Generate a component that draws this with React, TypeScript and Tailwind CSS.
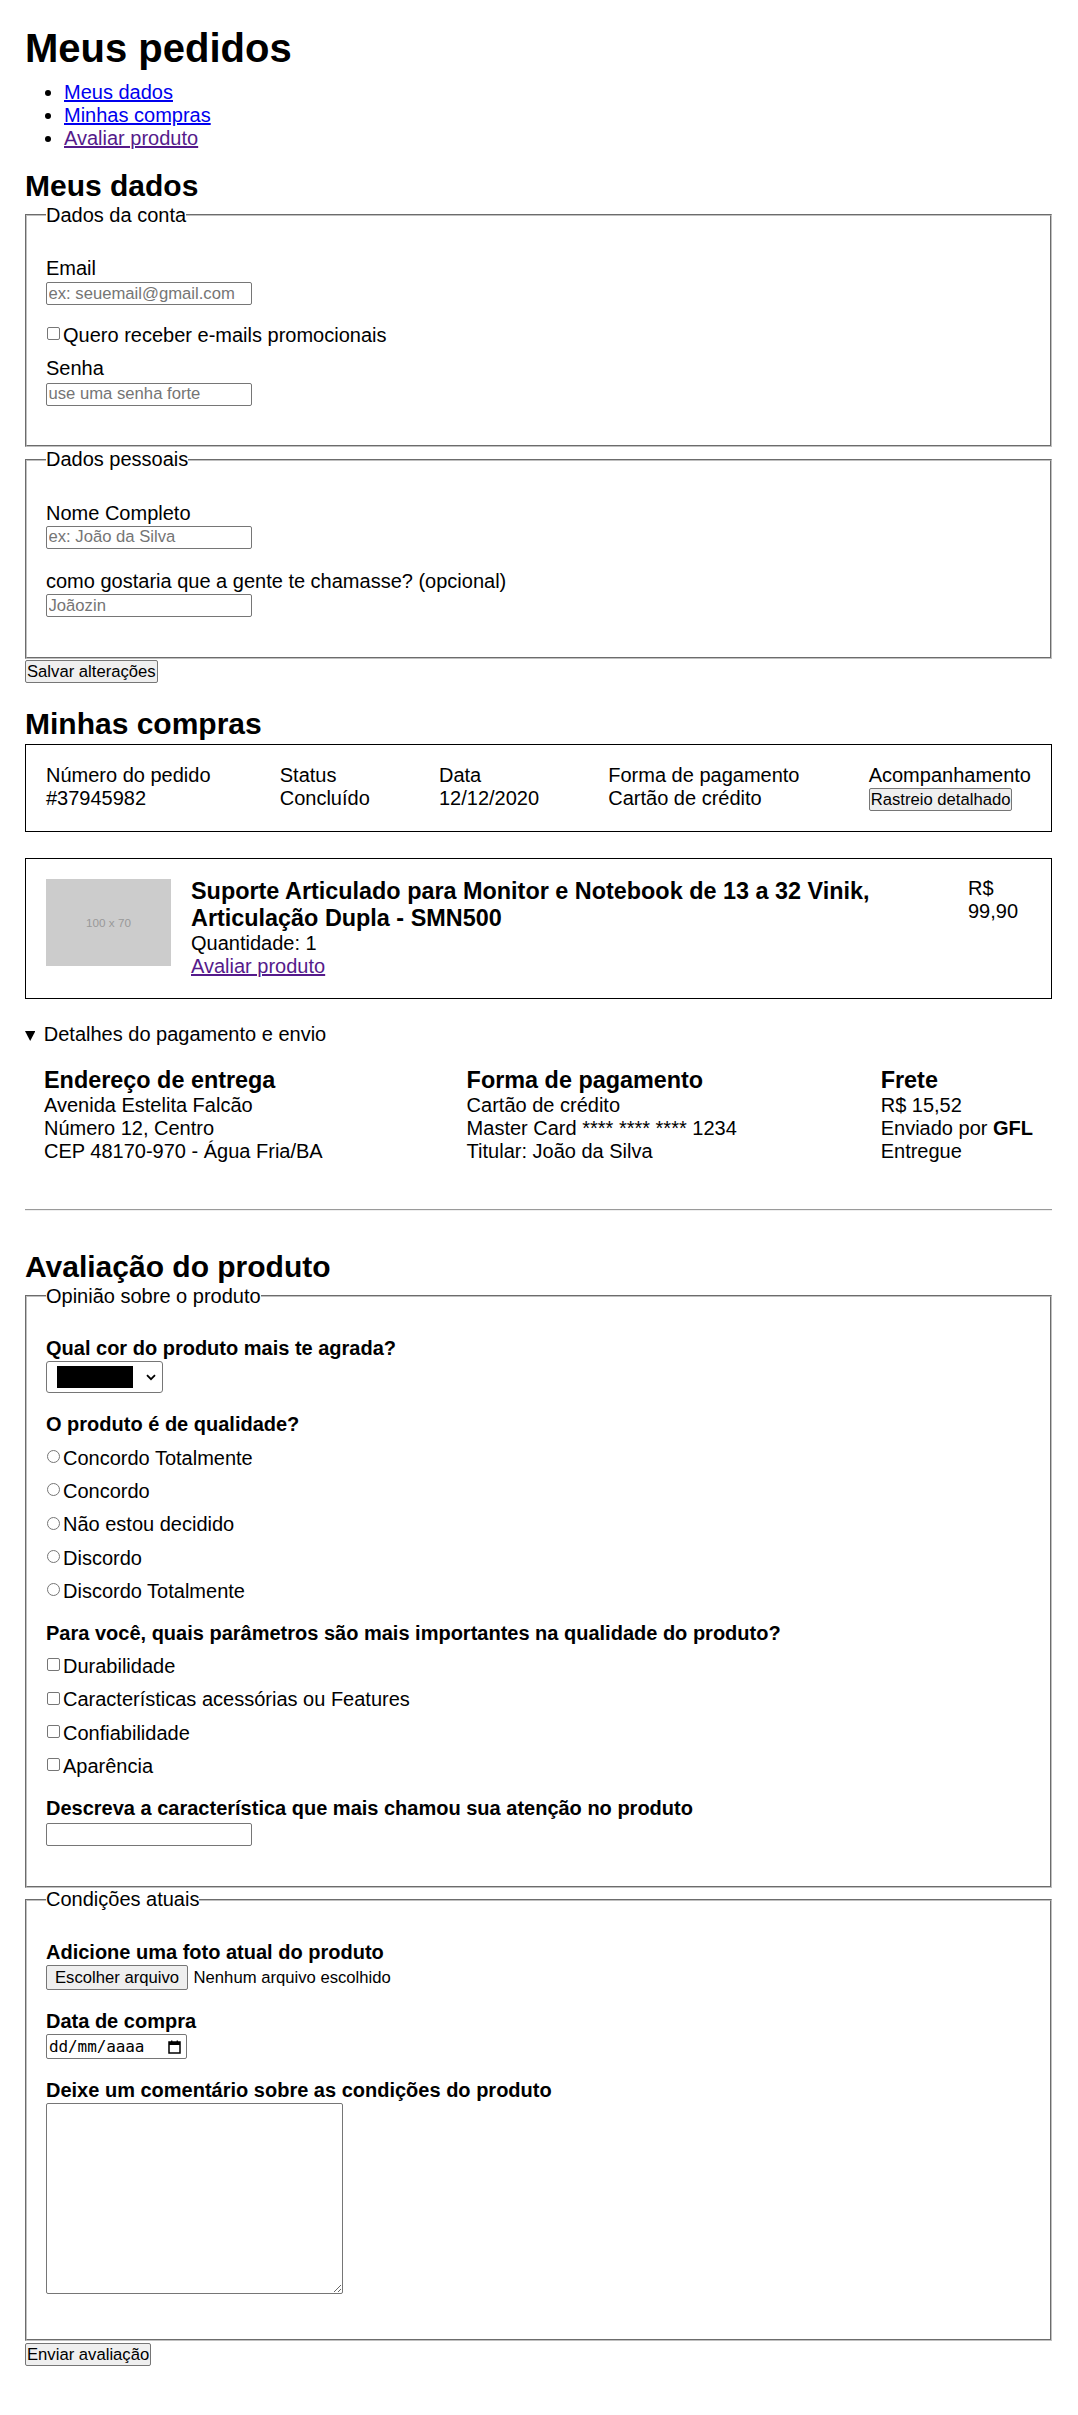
import React from "react";

const fieldsetCls =
  "border-2 [--tw-border-style:groove] border-[#c0c0c0] px-[19px] min-w-0";
const inputCls =
  "block w-[206px] h-[23px] border border-[#767676] rounded-[2px] px-[1.5px] text-[16.67px] leading-[19px] bg-white placeholder:text-[#757575] outline-none";
const btnCls =
  "h-[23px] px-[1px] border border-[#767676] rounded-[2px] bg-[#efefef] text-[16.67px] leading-[19px] text-black";

function Radio({ label }: { label: string }) {
  return (
    <label className="mt-[10.3px] flex items-start h-[23px]">
      <input
        type="radio"
        name="qualidade"
        className="appearance-none m-0 ml-[1px] mt-[3.4px] mr-[3px] w-[13px] h-[13px] shrink-0 rounded-full border border-[#767676] bg-white"
      />
      <span>{label}</span>
    </label>
  );
}

function Check({ label, className = "" }: { label: string; className?: string }) {
  return (
    <label className={"flex items-start h-[23px] " + className}>
      <input
        type="checkbox"
        className="appearance-none m-0 ml-[1px] mt-[3.4px] mr-[3px] w-[13px] h-[13px] shrink-0 rounded-[2px] border border-[#767676] bg-white"
      />
      <span>{label}</span>
    </label>
  );
}

export default function App() {
  return (
    <div className="min-h-[2415px] bg-white text-black font-['Liberation_Sans',Arial,sans-serif] text-[20px] leading-[23px] pl-[25px] pr-[26px] pt-[25px]">
      <h1 className="text-[40px] leading-[46px] font-bold">Meus pedidos</h1>
      <ul className="mt-[9.9px] list-disc pl-[39px]">
        <li>
          <a href="#meus-dados" className="text-[#0000ee] underline">
            Meus dados
          </a>
        </li>
        <li>
          <a href="#minhas-compras" className="text-[#0000ee] underline">
            Minhas compras
          </a>
        </li>
        <li>
          <a href="#avaliar" className="text-[#551a8b] underline">
            Avaliar produto
          </a>
        </li>
      </ul>

      {/* Meus dados */}
      <h2 id="meus-dados" className="mt-[19.3px] text-[30px] leading-[34.5px] font-bold">
        Meus dados
      </h2>
      <form>
        <fieldset className={fieldsetCls + " pt-[30.3px] pb-[39.7px]"}>
          <legend className="leading-[23px]">Dados da conta</legend>
          <label className="block">Email</label>
          <input className={inputCls + " mt-[2.1px]"} placeholder="ex: seuemail@gmail.com" />
          <Check label="Quero receber e-mails promocionais" className="mt-[18.9px]" />
          <label className="block mt-[10.3px]">Senha</label>
          <input
            type="password"
            className={inputCls + " mt-[2.4px]"}
            placeholder="use uma senha forte"
          />
        </fieldset>
        <fieldset className={fieldsetCls + " mt-[1px] pt-[30.2px] pb-[40px]"}>
          <legend className="leading-[23px]">Dados pessoais</legend>
          <label className="block">Nome Completo</label>
          <input className={inputCls + " mt-[1.4px]"} placeholder="ex: João da Silva" />
          <label className="block mt-[21px]">
            como gostaria que a gente te chamasse? (opcional)
          </label>
          <input className={inputCls + " mt-[1.4px]"} placeholder="Joãozin" />
        </fieldset>
        <button type="button" className={btnCls + " mt-[1px] block"}>
          Salvar alterações
        </button>
      </form>

      {/* Minhas compras */}
      <h2 id="minhas-compras" className="mt-[23.6px] text-[30px] leading-[34.5px] font-bold">
        Minhas compras
      </h2>
      <div className="mt-[2.4px] border border-black px-[20px] pt-[19px] pb-[20px] flex justify-between">
        <div>
          <div>Número do pedido</div>
          <div>#37945982</div>
        </div>
        <div>
          <div>Status</div>
          <div>Concluído</div>
        </div>
        <div>
          <div>Data</div>
          <div>12/12/2020</div>
        </div>
        <div>
          <div>Forma de pagamento</div>
          <div>Cartão de crédito</div>
        </div>
        <div>
          <div>Acompanhamento</div>
          <button type="button" className={btnCls + " mt-[1px] block"}>
            Rastreio detalhado
          </button>
        </div>
      </div>

      <div className="mt-[26px] border border-black p-[20px] flex items-start gap-[20px]">
        <div className="w-[125px] h-[87.5px] shrink-0 bg-[#cccccc] flex items-center justify-center text-[11.7px] leading-[14px] text-[#999999]">
          100 x 70
        </div>
        <div className="flex-1 -mt-[1px]">
          <h3 className="text-[23.4px] leading-[26.9px] font-bold">
            Suporte Articulado para Monitor e Notebook de 13 a 32 Vinik, Articulação Dupla - SMN500
          </h3>
          <p>Quantidade: 1</p>
          <a href="#avaliar" className="text-[#551a8b] underline">
            Avaliar produto
          </a>
        </div>
        <div className="w-[63px] shrink-0 -mt-[1.5px]">R$ 99,90</div>
      </div>

      <details open className="mt-[24.6px]">
        <summary className="flex items-start cursor-pointer list-none">
          <svg width="10.4" height="10" viewBox="0 0 10.4 10" className="mt-[7.4px] shrink-0">
            <polygon points="0,0 10.4,0 5.2,10" fill="#000" />
          </svg>
          <span className="ml-[8.4px]">Detalhes do pagamento e envio</span>
        </summary>
        <div className="mt-[21px] px-[19px] flex justify-between">
          <div>
            <h3 className="text-[23.4px] leading-[26.9px] font-bold">Endereço de entrega</h3>
            <div>Avenida Estelita Falcão</div>
            <div>Número 12, Centro</div>
            <div>CEP 48170-970 - Água Fria/BA</div>
          </div>
          <div>
            <h3 className="text-[23.4px] leading-[26.9px] font-bold">Forma de pagamento</h3>
            <div>Cartão de crédito</div>
            <div>Master Card **** **** **** 1234</div>
            <div>Titular: João da Silva</div>
          </div>
          <div>
            <h3 className="text-[23.4px] leading-[26.9px] font-bold">Frete</h3>
            <div>R$ 15,52</div>
            <div>
              Enviado por <b className="font-bold">GFL</b>
            </div>
            <div>Entregue</div>
          </div>
        </div>
      </details>

      <hr className="mt-[45.6px] border-0 border-t border-b border-t-[#9a9a9a] border-b-[#eeeeee]" />

      {/* Avaliação */}
      <h2 id="avaliar" className="mt-[39.6px] text-[30px] leading-[34.5px] font-bold">
        Avaliação do produto
      </h2>
      <form>
        <fieldset className={fieldsetCls + " mt-0 pt-[29px] pb-[40.4px]"}>
          <legend className="leading-[23px]">Opinião sobre o produto</legend>
          <div className="font-bold">Qual cor do produto mais te agrada?</div>
          <div className="mt-[1.1px] w-[117px] h-[32.6px] border border-[#767676] rounded-[3px] flex items-center pl-[10px] pr-[6px] justify-between bg-white">
            <div className="w-[76px] h-[22px] bg-black" />
            <svg width="10" height="7" viewBox="0 0 10 7" className="shrink-0">
              <polyline
                points="1,1.2 5,5.2 9,1.2"
                fill="none"
                stroke="#000"
                strokeWidth="1.8"
              />
            </svg>
          </div>

          <div className="mt-[20px] font-bold">O produto é de qualidade?</div>
          <Radio label="Concordo Totalmente" />
          <Radio label="Concordo" />
          <Radio label="Não estou decidido" />
          <Radio label="Discordo" />
          <Radio label="Discordo Totalmente" />

          <div className="mt-[18.7px] font-bold">
            Para você, quais parâmetros são mais importantes na qualidade do produto?
          </div>
          <Check label="Durabilidade" className="mt-[10.3px]" />
          <Check label="Características acessórias ou Features" className="mt-[10.3px]" />
          <Check label="Confiabilidade" className="mt-[10.3px]" />
          <Check label="Aparência" className="mt-[10.3px]" />

          <div className="mt-[19.3px] font-bold">
            Descreva a característica que mais chamou sua atenção no produto
          </div>
          <input className={inputCls + " mt-[2.7px]"} />
        </fieldset>

        <fieldset className={fieldsetCls + " pt-[29.5px] pb-[45px]"}>
          <legend className="leading-[23px]">Condições atuais</legend>
          <div className="font-bold">Adicione uma foto atual do produto</div>
          <div className="mt-[1.4px] flex items-center h-[24.7px]">
            <span className="h-[24.7px] flex items-center px-[8px] border border-[#767676] rounded-[2px] bg-[#efefef] text-[16.67px] leading-[19px]">
              Escolher arquivo
            </span>
            <span className="ml-[5.5px] text-[16.67px] leading-[19px]">Nenhum arquivo escolhido</span>
          </div>

          <div className="mt-[19.9px] font-bold">Data de compra</div>
          <div className="mt-[1.4px] w-[140.6px] h-[25px] border border-[#767676] rounded-[2px] flex items-center pl-[2px] pr-[5px] justify-between bg-white">
            <span className="font-['DejaVu_Sans_Mono',monospace] text-[16px] leading-[19px] text-black tracking-[-0.1px]">
              dd/mm/aaaa
            </span>
            <svg width="13" height="14" viewBox="0 0 13 14" className="shrink-0">
              <rect x="1" y="2" width="11" height="11" fill="none" stroke="#000" strokeWidth="1.5" />
              <rect x="1" y="2" width="11" height="3" fill="#000" />
              <rect x="3" y="0.5" width="1.4" height="2" fill="#000" />
              <rect x="8.6" y="0.5" width="1.4" height="2" fill="#000" />
            </svg>
          </div>

          <div className="mt-[20px] font-bold">
            Deixe um comentário sobre as condições do produto
          </div>
          <textarea className="block mt-[1px] w-[297px] h-[191px] border border-[#767676] rounded-[2px] resize bg-white outline-none" />
        </fieldset>
        <button type="button" className={btnCls + " mt-[2.4px] block"}>
          Enviar avaliação
        </button>
      </form>
    </div>
  );
}
